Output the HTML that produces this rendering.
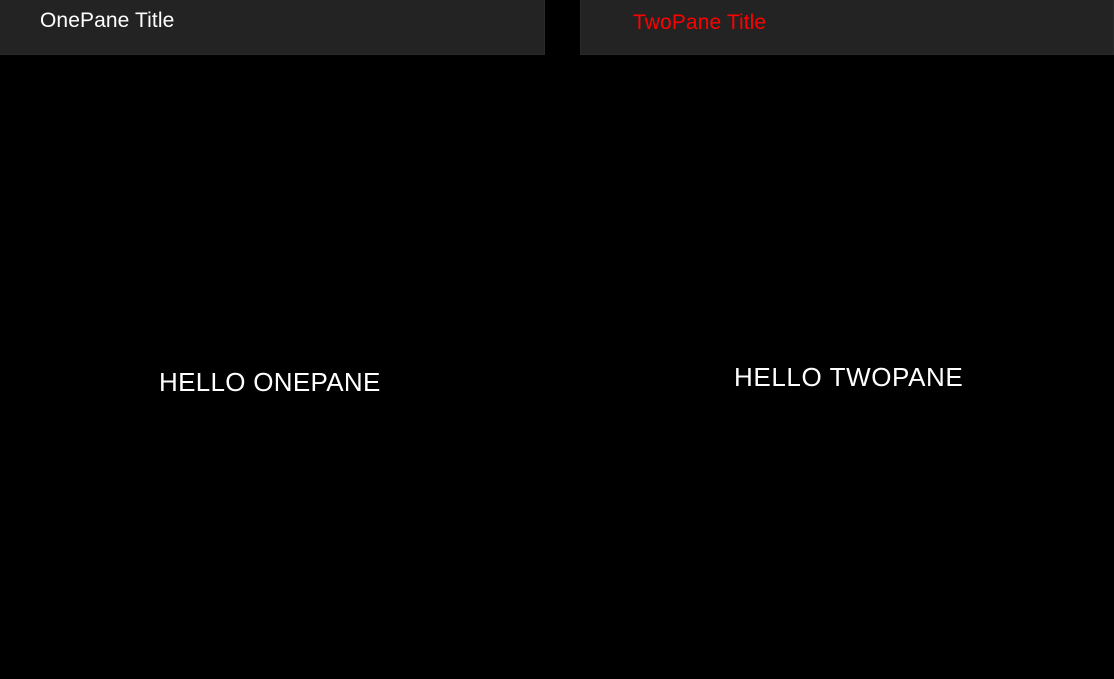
<!DOCTYPE html>
<html><head><style>
body{margin:0;width:1114px;height:679px;background:#000;position:relative;overflow:hidden;font-family:"Liberation Sans",sans-serif;}
.h{position:absolute;top:0;height:55px;background:#232323;border-right:1px solid #2a2a2a;border-bottom:1px solid #2a2a2a;box-sizing:border-box;}
.t{position:absolute;white-space:nowrap;}
</style></head><body>
<div class="h" style="left:0;width:545px"></div>
<div class="h" style="left:580px;width:534px;border-left:1px solid #2a2a2a"></div>
<div class="t" style="left:40px;top:9px;font-size:21px;color:#fff;letter-spacing:0.1px">OnePane Title</div>
<div class="t" style="left:633px;top:11px;font-size:21px;color:#f00;letter-spacing:0.1px">TwoPane Title</div>
<div class="t" style="left:159px;top:367px;font-size:26px;color:#fff;letter-spacing:0.3px">HELLO ONEPANE</div>
<div class="t" style="left:734px;top:362px;font-size:26px;color:#fff;letter-spacing:0.6px">HELLO TWOPANE</div>
</body></html>
